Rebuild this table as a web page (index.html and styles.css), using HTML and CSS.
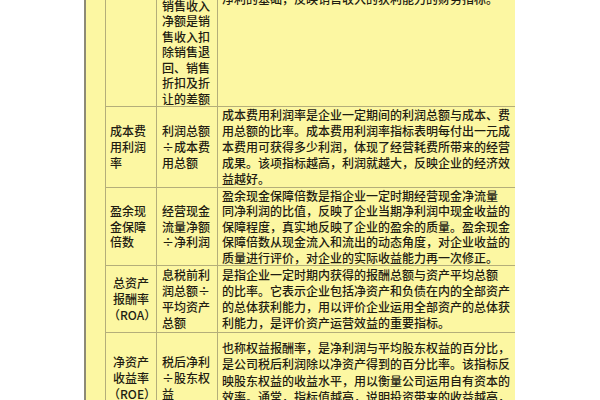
FILE: index.html
```html
<!DOCTYPE html>
<html lang="zh">
<head>
<meta charset="utf-8">
<title>财务指标</title>
<link rel="stylesheet" href="styles.css">
</head>
<body>
<div class="page">
  <div class="sheet">
    <table class="grid">
      <colgroup>
        <col class="c-name">
        <col class="c-formula">
        <col class="c-desc">
      </colgroup>
      <tr class="r1">
        <td class="name top">销售<br>净利率</td>
        <td class="formula bottom">净利润÷<br>销售收入<br>净额。<br>销售收入<br>净额是销<br>售收入扣<br>除销售退<br>回、销售<br>折扣及折<br>让的差额</td>
        <td class="desc top pad-r1">销售净利率是指企业实现的净利润与销售收入的对比<br>关系，用以衡量企业在一定时期的销售收入获取的能<br>力。该指标以销售收入为基础，体现企业的盈利水平<br>净利的基础，反映销售收入的获利能力的财务指标。</td>
      </tr>
      <tr class="r2">
        <td class="name">成本费<br>用利润<br>率</td>
        <td class="formula">利润总额<br>÷成本费<br>用总额</td>
        <td class="desc">成本费用利润率是企业一定期间的利润总额与成本、费<br>用总额的比率。成本费用利润率指标表明每付出一元成<br>本费用可获得多少利润，体现了经营耗费所带来的经营<br>成果。该项指标越高，利润就越大，反映企业的经济效<br>益越好。</td>
      </tr>
      <tr class="r3">
        <td class="name">盈余现<br>金保障<br>倍数</td>
        <td class="formula">经营现金<br>流量净额<br>÷净利润</td>
        <td class="desc">盈余现金保障倍数是指企业一定时期经营现金净流量<br>同净利润的比值，反映了企业当期净利润中现金收益的<br>保障程度，真实地反映了企业的盈余的质量。盈余现金<br>保障倍数从现金流入和流出的动态角度，对企业收益的<br>质量进行评价，对企业的实际收益能力再一次修正。</td>
      </tr>
      <tr class="r4">
        <td class="name centered">总资产<br>报酬率<br>（ROA）</td>
        <td class="formula">息税前利<br>润总额÷<br>平均资产<br>总额</td>
        <td class="desc">是指企业一定时期内获得的报酬总额与资产平均总额<br>的比率。它表示企业包括净资产和负债在内的全部资产<br>的总体获利能力，用以评价企业运用全部资产的总体获<br>利能力，是评价资产运营效益的重要指标。</td>
      </tr>
      <tr class="r5">
        <td class="name centered">净资产<br>收益率<br>（ROE）</td>
        <td class="formula">税后净利<br>÷股东权<br>益</td>
        <td class="desc top pad-r5">也称权益报酬率，是净利润与平均股东权益的百分比，<br>是公司税后利润除以净资产得到的百分比率。该指标反<br>映股东权益的收益水平，用以衡量公司运用自有资本的<br>效率。通常，指标值越高，说明投资带来的收益越高，<br>但如果企业运用了较高的财务杠杆水平，则权益报酬率</td>
      </tr>
    </table>
  </div>
</div>
</body>
</html>
```

FILE: styles.css
```css
html, body {
  margin: 0;
  padding: 0;
  background: #ffffff;
}

.page {
  width: 600px;
  height: 400px;
  overflow: hidden;
}

.sheet {
  margin-left: 84px;
  width: 410px;
  height: 400px;
  padding-left: 19px;
  border-left: 2px solid #8d8a76;
  background: #fcf7a2;
  overflow: hidden;
}

.grid {
  border-collapse: collapse;
  table-layout: fixed;
  width: 410px;
  margin-top: -62px;
  font-family: "Noto Sans CJK SC", "Noto Sans", sans-serif;
  font-size: 12px;
  font-weight: 500;
  line-height: 16px;
  color: #1f1d12;
}

.c-name { width: 51px; }
.c-formula { width: 61px; }
.c-desc { width: 298px; }

.grid td {
  border: 1px solid #b4ae7a;
  vertical-align: middle;
  padding: 0 3px 0 5px;
  white-space: nowrap;
  overflow: hidden;
}

.grid td.name {
  padding-left: 4px;
  padding-right: 2px;
}

.grid td.centered {
  text-align: center;
  padding-left: 2px;
}

.grid td.formula {
  padding-left: 5px;
  padding-right: 2px;
}

.grid td.desc {
  padding-left: 4px;
  padding-right: 2px;
}

.grid td.top { vertical-align: top; }
.grid td.bottom { vertical-align: bottom; }

.r1 td.formula { line-height: 15.5px; }
.grid td.pad-r1 { padding-top: 4px; }

.r1 { height: 168px; }
.r2 { height: 80px; }
.r3 { height: 77px; }
.r3 td { line-height: 15.4px; }
.r4 { height: 67px; }
.r5 { height: 90px; }

.grid td.pad-r5 {
  padding-top: 7px;
  line-height: 16.4px;
}
```
